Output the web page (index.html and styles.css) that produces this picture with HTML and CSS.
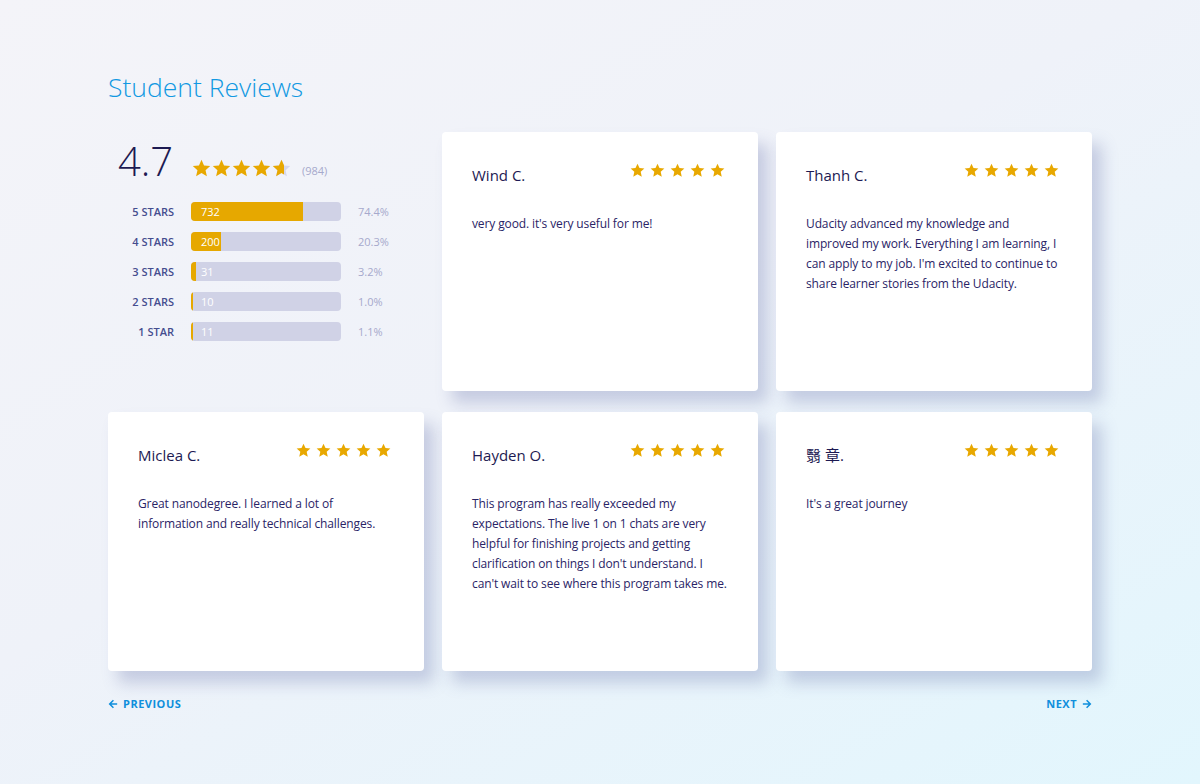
FILE: index.html
```html
<!DOCTYPE html>
<html lang="en">
<head>
    <meta charset="UTF-8">
    <meta name="viewport" content="width=device-width, initial-scale=1.0">
    <title>Student Reviews</title>
    <link rel="stylesheet" href="styles.css">
</head>
<body>
    <svg width="0" height="0" class="defs">
        <symbol id="star" viewBox="0 0 24 24">
            <path d="M12 1l3.2 7.1 7.8.8-5.9 5.2 1.7 7.7L12 17.8l-6.8 4 1.7-7.7L1 8.9l7.8-.8z"/>
        </symbol>
        <symbol id="arrow" viewBox="0 0 12 12">
            <path d="M6.5 1.5L2 6l4.5 4.5M2 6h9" fill="none" stroke="currentColor" stroke-width="1.8"/>
        </symbol>
    </svg>

    <div class="page">
        <h1>Student Reviews</h1>

        <div class="grid">
            <div class="summary">
                <div class="score-row">
                    <span class="score">4.7</span>
                    <span class="stars big">
                        <svg><use href="#star"/></svg>
                        <svg><use href="#star"/></svg>
                        <svg><use href="#star"/></svg>
                        <svg><use href="#star"/></svg>
                        <svg viewBox="0 0 24 24">
                            <defs><clipPath id="part"><rect x="0" y="0" width="15" height="24"/></clipPath></defs>
                            <use href="#star" class="empty"/>
                            <use href="#star" clip-path="url(#part)"/>
                        </svg>
                    </span>
                    <span class="count">(984)</span>
                </div>

                <div class="bars">
                    <div class="bar-row">
                        <span class="bar-label">5 Stars</span>
                        <div class="bar"><div class="fill" style="width: 74.4%"></div><span class="num">732</span></div>
                        <span class="pct">74.4%</span>
                    </div>
                    <div class="bar-row">
                        <span class="bar-label">4 Stars</span>
                        <div class="bar"><div class="fill" style="width: 20.3%"></div><span class="num">200</span></div>
                        <span class="pct">20.3%</span>
                    </div>
                    <div class="bar-row">
                        <span class="bar-label">3 Stars</span>
                        <div class="bar"><div class="fill" style="width: 3.2%"></div><span class="num">31</span></div>
                        <span class="pct">3.2%</span>
                    </div>
                    <div class="bar-row">
                        <span class="bar-label">2 Stars</span>
                        <div class="bar"><div class="fill" style="width: 1.0%"></div><span class="num">10</span></div>
                        <span class="pct">1.0%</span>
                    </div>
                    <div class="bar-row">
                        <span class="bar-label">1 Star</span>
                        <div class="bar"><div class="fill" style="width: 1.1%"></div><span class="num">11</span></div>
                        <span class="pct">1.1%</span>
                    </div>
                </div>
            </div>

            <div class="card">
                <div class="card-head">
                    <span class="name">Wind C.</span>
                    <span class="stars"><svg><use href="#star"/></svg><svg><use href="#star"/></svg><svg><use href="#star"/></svg><svg><use href="#star"/></svg><svg><use href="#star"/></svg></span>
                </div>
                <p>very good. it's very useful for me!</p>
            </div>

            <div class="card">
                <div class="card-head">
                    <span class="name">Thanh C.</span>
                    <span class="stars"><svg><use href="#star"/></svg><svg><use href="#star"/></svg><svg><use href="#star"/></svg><svg><use href="#star"/></svg><svg><use href="#star"/></svg></span>
                </div>
                <p>Udacity advanced my knowledge and improved my work. Everything I am learning, I can apply to my job. I'm excited to continue to share learner stories from the Udacity.</p>
            </div>

            <div class="card">
                <div class="card-head">
                    <span class="name">Miclea C.</span>
                    <span class="stars"><svg><use href="#star"/></svg><svg><use href="#star"/></svg><svg><use href="#star"/></svg><svg><use href="#star"/></svg><svg><use href="#star"/></svg></span>
                </div>
                <p>Great nanodegree. I learned a lot of information and really technical challenges.</p>
            </div>

            <div class="card">
                <div class="card-head">
                    <span class="name">Hayden O.</span>
                    <span class="stars"><svg><use href="#star"/></svg><svg><use href="#star"/></svg><svg><use href="#star"/></svg><svg><use href="#star"/></svg><svg><use href="#star"/></svg></span>
                </div>
                <p>This program has really exceeded my expectations. The live 1 on 1 chats are very helpful for finishing projects and getting clarification on things I don't understand. I can't wait to see where this program takes me.</p>
            </div>

            <div class="card">
                <div class="card-head">
                    <span class="name">翳 章.</span>
                    <span class="stars"><svg><use href="#star"/></svg><svg><use href="#star"/></svg><svg><use href="#star"/></svg><svg><use href="#star"/></svg><svg><use href="#star"/></svg></span>
                </div>
                <p>It's a great journey</p>
            </div>
        </div>

        <div class="pager">
            <a href="#" class="pager-link"><svg class="arrow"><use href="#arrow"/></svg>Previous</a>
            <a href="#" class="pager-link">Next<svg class="arrow flip"><use href="#arrow"/></svg></a>
        </div>
    </div>
</body>
</html>
```

FILE: styles.css
```css
html, body {
    margin: 0;
    height: 100%;
}
body {
    font-family: "Open Sans", "Noto Sans CJK SC", sans-serif;
    background: linear-gradient(150deg, #f4f4f9 0%, #eff2f9 45%, #e2f6fd 100%);
    color: #1d1a52;
}
.defs {
    position: absolute;
}
.page {
    width: 984px;
    margin: 0 auto;
    padding-top: 69px;
}
h1 {
    margin: 0 0 27px;
    font-size: 26.5px;
    font-weight: 300;
    line-height: 36px;
    color: #1199e2;
}
.grid {
    display: grid;
    grid-template-columns: repeat(3, 316px);
    grid-template-rows: 259px 259px;
    column-gap: 18px;
    row-gap: 21px;
}

/* summary */
.summary {
    padding-top: 5px;
}
.score-row {
    display: flex;
    align-items: flex-end;
    height: 44px;
}
.score {
    font-size: 40px;
    font-weight: 300;
    line-height: 40px;
    margin-left: 10px;
    width: 74px;
    color: #1d1a52;
}
.stars {
    display: flex;
    gap: 5px;
    fill: #e8a800;
}
.stars svg {
    width: 15px;
    height: 15px;
}
.stars.big {
    gap: 1px;
    margin-bottom: 3px;
}
.stars.big svg {
    width: 19px;
    height: 19px;
}
.stars .empty {
    fill: #d6d7ea;
}
.count {
    font-size: 11px;
    color: #a6a9cc;
    margin-left: 11px;
    line-height: 20px;
}
.bars {
    margin-top: 20px;
    display: flex;
    flex-direction: column;
    gap: 10px;
}
.bar-row {
    display: flex;
    align-items: center;
    height: 20px;
}
.bar-label {
    width: 66px;
    text-align: right;
    font-size: 11px;
    font-weight: 600;
    text-transform: uppercase;
    color: #454d8f;
}
.bar {
    position: relative;
    width: 150px;
    height: 19px;
    margin-left: 17px;
    background: #d0d2e6;
    border-radius: 4px;
    overflow: hidden;
}
.fill {
    height: 100%;
    background: #e6a800;
}
.num {
    position: absolute;
    left: 10px;
    top: 0;
    font-size: 11px;
    line-height: 19px;
    color: #fff;
}
.pct {
    margin-left: 17px;
    font-size: 11px;
    color: #a6a9cc;
}

/* cards */
.card {
    background: #fff;
    border-radius: 4px;
    padding: 32px 28px 0 30px;
    box-shadow: 10px 12px 16px rgba(90, 100, 160, 0.28);
}
.card-head {
    display: flex;
    justify-content: space-between;
    align-items: flex-start;
}
.card-head .stars {
    margin: -1px 5px 0 0;
}
.name {
    font-size: 15px;
    line-height: 22px;
    color: #1d1a52;
}
.card p {
    margin: 28px 0 0;
    font-size: 12px;
    letter-spacing: -0.12px;
    line-height: 20px;
    color: #2a2466;
}

/* pager */
.pager {
    display: flex;
    justify-content: space-between;
    margin-top: 26px;
}
.pager-link {
    display: flex;
    align-items: center;
    gap: 5px;
    font-size: 11px;
    font-weight: 700;
    letter-spacing: 0.5px;
    line-height: 14px;
    text-transform: uppercase;
    text-decoration: none;
    color: #0f8fdc;
}
.arrow {
    width: 10px;
    height: 10px;
}
.arrow.flip {
    transform: scaleX(-1);
}
```
